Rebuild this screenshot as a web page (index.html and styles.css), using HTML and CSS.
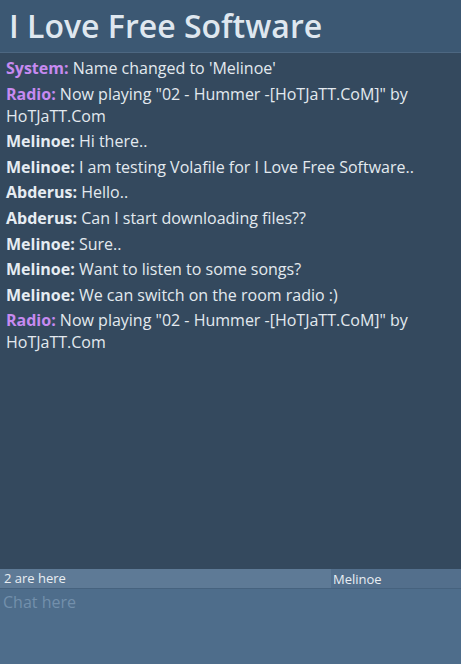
FILE: index.html
```html
<!DOCTYPE html>
<html lang="en">
  <head>
    <meta charset="UTF-8" />
    <meta name="viewport" content="width=device-width, initial-scale=1.0" />
    <title>I Love Free Software</title>
    <link rel="stylesheet" href="styles.css">
  </head>
  <body>
    <div class="room">
      <header class="room-header">
        <h1>I Love Free Software</h1>
      </header>

      <div class="messages">
        <div class="msg"><span class="nick system">System:</span> Name changed to 'Melinoe'</div>
        <div class="msg"><span class="nick system">Radio:</span> Now playing "02 - Hummer -[HoTJaTT.CoM]" by HoTJaTT.Com</div>
        <div class="msg"><span class="nick">Melinoe:</span> Hi there..</div>
        <div class="msg"><span class="nick">Melinoe:</span> I am testing Volafile for I Love Free Software..</div>
        <div class="msg"><span class="nick">Abderus:</span> Hello..</div>
        <div class="msg"><span class="nick">Abderus:</span> Can I start downloading files??</div>
        <div class="msg"><span class="nick">Melinoe:</span> Sure..</div>
        <div class="msg"><span class="nick">Melinoe:</span> Want to listen to some songs?</div>
        <div class="msg"><span class="nick">Melinoe:</span> We can switch on the room radio :)</div>
        <div class="msg"><span class="nick system">Radio:</span> Now playing "02 - Hummer -[HoTJaTT.CoM]" by HoTJaTT.Com</div>
      </div>

      <div class="status-bar">
        <span class="user-count">2 are here</span>
        <span class="nickname">Melinoe</span>
      </div>
      <textarea class="chat-input" placeholder="Chat here"></textarea>
    </div>
  </body>
</html>
```

FILE: styles.css
```css
html,
body {
  height: 100%;
}
body {
  margin: 0;
  font-family: "Open Sans", "Noto Sans", sans-serif;
  background-color: #34495e;
  color: #e3e9ef;
}
.room {
  display: flex;
  flex-direction: column;
  height: 100%;
}
.room-header {
  background-color: #3c5873;
  border-bottom: 1px solid #4d6781;
  height: 52px;
  display: flex;
  align-items: center;
  padding: 0 9px;
}
.room-header h1 {
  margin: 0;
  font-size: 32px;
  font-weight: 600;
  color: #dfe7ef;
  margin-top: -2px;
}
.messages {
  flex: 1;
  padding: 4px 6px 0;
  font-size: 16px;
  line-height: 22px;
}
.msg {
  margin-bottom: 3.6px;
}
.nick {
  font-weight: 700;
  color: #e6ecf2;
}
.nick.system {
  color: #c68af0;
}
.status-bar {
  display: flex;
  height: 19px;
  border-bottom: 1px solid #46627e;
  font-size: 13px;
  line-height: 19px;
  color: #e9eef3;
}
.user-count {
  flex: 0 0 327px;
  background-color: #5e7a96;
  padding-left: 4px;
}
.nickname {
  flex: 1;
  background-color: #536f8c;
  padding-left: 2px;
  line-height: 20px;
}
.chat-input {
  display: block;
  height: 75px;
  box-sizing: border-box;
  margin: 0;
  border: none;
  resize: none;
  outline: none;
  padding: 2px 3px;
  background-color: #4e6d8b;
  color: #e3e9ef;
  font-family: "Open Sans", "Noto Sans", sans-serif;
  font-size: 16px;
}
.chat-input::placeholder {
  color: #7390ac;
}
```
